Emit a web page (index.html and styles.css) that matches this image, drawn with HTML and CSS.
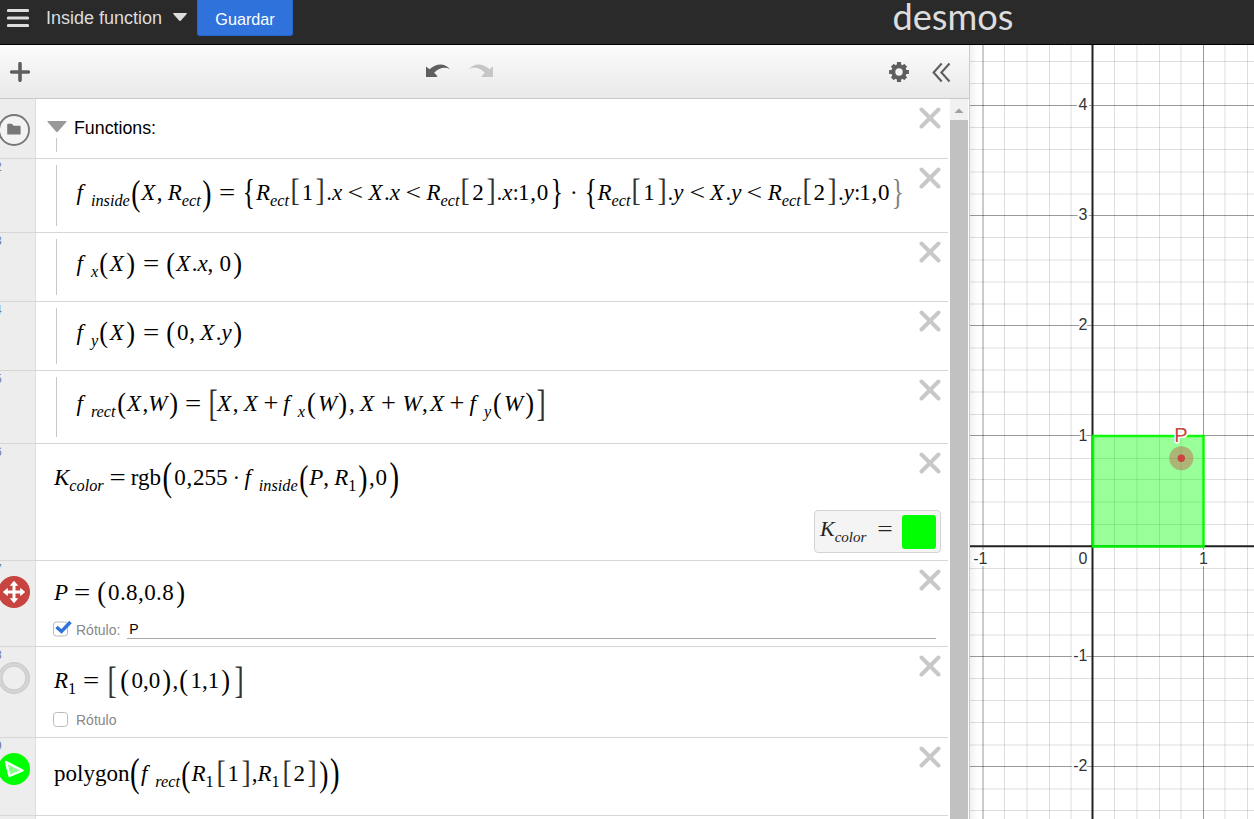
FILE: index.html
```html
<!DOCTYPE html>
<html lang="pt">
<head>
  <meta charset="UTF-8">
  <title>Inside function</title>
  <link rel="stylesheet" href="styles.css">
</head>
<body>

<header class="topbar">
  <svg class="menu-icon" width="22" height="20" viewBox="0 0 22 20">
    <path d="M1.5 2.5h19M1.5 10h19M1.5 17.5h19" stroke="#ddd" stroke-width="3.2" stroke-linecap="round"/>
  </svg>
  <span class="title">Inside function</span>
  <svg class="caret" width="14" height="9" viewBox="0 0 14 9"><path d="M.7 0h12.600q1 .2.4 1l-6 6.800q-.7.6-1.400 0l-6-6.800q-.6-.8.4-1z" fill="#ddd"/></svg>
  <button class="save">Guardar</button>
  <svg class="logo" width="130" height="43" viewBox="0 0 130 43">
    <text x="2.500" y="30" textLength="121" lengthAdjust="spacingAndGlyphs">desmos</text>
  </svg>
</header>

<main class="main">
  <section class="panel">
    <div class="toolbar">
      <svg class="add" width="20" height="20" viewBox="0 0 20 20"><path d="M10 1.700v16.600M1.700 10h16.600" stroke="#5f5f5f" stroke-width="3.600" stroke-linecap="round"/></svg>
      <svg class="undo" width="24" height="15" viewBox="0 0 24 15"><path d="M0 2.500l3.500 2.800C10-1 19-1.500 24 5.300 19 2.500 13 3.800 8.200 8.800L11.500 12.300 10.500 13H0z" fill="#5f5f5f"/></svg>
      <svg class="redo" width="24" height="15" viewBox="0 0 24 15"><path d="M24 2.500l-3.500 2.800C14-1 5-1.500 0 5.300 5 2.500 11 3.800 15.800 8.800L12.500 12.300l1 .7H24z" fill="#c6c6c6"/></svg>
      <svg class="gear" width="20" height="20" viewBox="-10 -10 20 20">
        <circle r="5.700" fill="none" stroke="#5f5f5f" stroke-width="4"/>
        <path d="M0-9.900V-6M0 9.900V6M-9.900 0H-6M9.900 0H6M-6.700-6.700l2 2M6.700-6.700l-2 2M-6.700 6.700l2-2M6.700 6.700l-2-2" stroke="#5f5f5f" stroke-width="4.200"/>
      </svg>
      <svg class="collapse" width="19" height="21" viewBox="0 0 19 21"><path d="M9.700 1.500L1.600 10.500l8.100 9M17.500 1.500l-8.100 9 8.100 9" fill="none" stroke="#5f5f5f" stroke-width="2.100"/></svg>
    </div>

    <div class="content">
      <div class="list">

        <div class="row row-folder">
          <div class="gutter">
            <span class="num"></span>
            <svg class="badge" width="32" height="32" viewBox="0 0 32 32">
              <circle cx="16" cy="16" r="15" fill="#f3f3f3" stroke="#777" stroke-width="1.800"/>
              <path d="M9.200 10.700q0-.9.900-.9h3.700l1.800 1.900h6q1 0 1 1v7q0 .9-1 .9H10.100q-.9 0-.9-.9z" fill="#777"/>
            </svg>
          </div>
          <div class="body folder">
            <svg class="fold" width="20" height="12" viewBox="0 0 20 12"><path d="M1 0h18q1 .1.400 1l-8.600 9.800q-.8.700-1.600 0L.6 1Q0 .1 1 0z" fill="#999"/></svg>
            <span class="folder-name">Functions:</span>
            <div class="folder-line"></div>
          </div>
          <svg class="close" viewBox="0 0 22 22"><path d="M2.500 2.500l17 17M19.500 2.500l-17 17"/></svg>
        </div>

        <div class="row row-inside">
          <div class="gutter"><span class="num">2</span></div>
          <div class="body nested">
            <div class="math">
              <var class="f">f</var><sub>inside</sub><b class="d2">(</b><var class="v">X</var><i class="comma">,</i><var>R</var><sub>ect</sub><b class="d2">)</b>
              <span class="eq">=</span>
              <b class="brace">{</b><var>R</var><sub>ect</sub><b class="br">[</b><span class="n">1</span><b class="br">]</b><span>.</span><var>x</var><span class="lt">&lt;</span><var class="v">X</var><span>.</span><var>x</var><span class="lt">&lt;</span><var>R</var><sub>ect</sub><b class="br">[</b><span class="n">2</span><b class="br">]</b><span>.</span><var>x</var><span>:</span><span class="tail">1,0</span><b class="brace">}</b>
              <span class="dot">·</span>
              <b class="brace">{</b><var>R</var><sub>ect</sub><b class="br">[</b><span class="n">1</span><b class="br">]</b><span>.</span><var>y</var><span class="lt">&lt;</span><var class="v">X</var><span>.</span><var>y</var><span class="lt">&lt;</span><var>R</var><sub>ect</sub><b class="br">[</b><span class="n">2</span><b class="br">]</b><span>.</span><var>y</var><span>:</span><span class="tail">1,0</span><b class="brace ghost">}</b>
            </div>
          </div>
          <svg class="close" viewBox="0 0 22 22"><path d="M2.500 2.500l17 17M19.500 2.500l-17 17"/></svg>
        </div>

        <div class="row row-fx">
          <div class="gutter"><span class="num">3</span></div>
          <div class="body nested">
            <div class="math">
              <var class="f">f</var><sub>x</sub><b class="d1">(</b><var class="v">X</var><b class="d1">)</b>
              <span class="eq">=</span>
              <b class="d1">(</b><var class="v">X</var><span>.</span><var>x</var><i class="comma">,</i><span class="n">0</span><b class="d1">)</b>
            </div>
          </div>
          <svg class="close" viewBox="0 0 22 22"><path d="M2.500 2.500l17 17M19.500 2.500l-17 17"/></svg>
        </div>

        <div class="row row-fy">
          <div class="gutter"><span class="num">4</span></div>
          <div class="body nested">
            <div class="math">
              <var class="f">f</var><sub>y</sub><b class="d1">(</b><var class="v">X</var><b class="d1">)</b>
              <span class="eq">=</span>
              <b class="d1">(</b><span class="n">0</span><i class="comma">,</i><var class="v">X</var><span>.</span><var>y</var><b class="d1">)</b>
            </div>
          </div>
          <svg class="close" viewBox="0 0 22 22"><path d="M2.500 2.500l17 17M19.500 2.500l-17 17"/></svg>
        </div>

        <div class="row row-rect">
          <div class="gutter"><span class="num">5</span></div>
          <div class="body nested">
            <div class="math">
              <var class="f">f</var><sub>rect</sub><b class="d1">(</b><var class="v">X</var><span>,</span><var class="w">W</var><b class="d1">)</b>
              <span class="eq">=</span>
              <b class="br big open">[</b><var class="v">X</var><i class="comma">,</i><var class="v">X</var><span class="plus">+</span><var class="f">f</var><sub>x</sub><b class="d1 wide">(</b><var class="w">W</var><b class="d1">)</b><i class="comma">,</i><var class="v">X</var><span class="plus wide">+</span><var class="w">W</var><i class="comma tight">,</i><var class="v">X</var><span class="plus">+</span><var class="f">f</var><sub>y</sub><b class="d1 wide">(</b><var class="w">W</var><b class="d1">)</b><b class="br big">]</b>
            </div>
          </div>
          <svg class="close" viewBox="0 0 22 22"><path d="M2.500 2.500l17 17M19.500 2.500l-17 17"/></svg>
        </div>

        <div class="row row-color">
          <div class="gutter"><span class="num">6</span></div>
          <div class="body">
            <div class="math">
              <var>K</var><sub>color</sub><span class="eq tight">=</span><span>rgb</span><b class="d3">(</b><span class="n">0</span><span>,</span><span class="n">255</span><span class="dot">·</span><var class="f">f</var><sub>inside</sub><b class="d2">(</b><var>P</var><i class="comma">,</i><var>R</var><sub class="up">1</sub><b class="d2">)</b><span>,</span><span class="n">0</span><b class="d3">)</b>
            </div>
            <div class="result">
              <div class="math small"><var>K</var><sub>color</sub><span class="eq">=</span></div>
              <div class="swatch"></div>
            </div>
          </div>
          <svg class="close" viewBox="0 0 22 22"><path d="M2.500 2.500l17 17M19.500 2.500l-17 17"/></svg>
        </div>

        <div class="row row-point">
          <div class="gutter">
            <span class="num">7</span>
            <svg class="badge" width="32" height="32" viewBox="0 0 32 32">
              <circle cx="16" cy="16" r="16" fill="#c74440"/>
              <path d="M16 8v16M8 16h16" stroke="#fff" stroke-width="3"/>
              <path d="M16 4.800l4.300 5h-8.600zM16 27.200l4.300-5h-8.600zM4.800 16l5-4.300v8.600zM27.200 16l-5-4.300v8.600z" fill="#fff"/>
            </svg>
          </div>
          <div class="body">
            <div class="math">
              <var>P</var><span class="eq tight">=</span><b class="d1">(</b><span class="pair">0.8,0.8</span><b class="d1">)</b>
            </div>
            <div class="label-line">
              <svg class="check" width="20" height="17" viewBox="0 0 20 17">
                <rect x=".5" y="2" width="14" height="14" rx="3" fill="#fff" stroke="#bbb"/>
                <path d="M3.500 7l5 4.500L17.500 2" fill="none" stroke="#2f72dc" stroke-width="3.400"/>
              </svg>
              <span class="label">Rótulo:</span>
              <span class="input">P</span>
            </div>
          </div>
          <svg class="close" viewBox="0 0 22 22"><path d="M2.500 2.500l17 17M19.500 2.500l-17 17"/></svg>
        </div>

        <div class="row row-list">
          <div class="gutter">
            <span class="num">8</span>
            <svg class="badge" width="32" height="32" viewBox="0 0 32 32">
              <circle cx="16" cy="16" r="13.600" fill="#eee" stroke="#ccc" stroke-width="4.800"/>
              <circle cx="16" cy="16" r="13.600" fill="none" stroke="#d6d6d6" stroke-width="2"/>
            </svg>
          </div>
          <div class="body">
            <div class="math">
              <var>R</var><sub class="up">1</sub><span class="eq tight">=</span><b class="br big">[</b><b class="d1">(</b><span class="n">0,0</span><b class="d1">)</b><span>,</span><b class="d1">(</b><span class="n">1,1</span><b class="d1">)</b><b class="br big">]</b>
            </div>
            <div class="label-line">
              <svg class="check" width="20" height="17" viewBox="0 0 20 17"><rect x=".5" y="2.500" width="14" height="14" rx="3" fill="#fff" stroke="#bbb"/></svg>
              <span class="label">Rótulo</span>
            </div>
          </div>
          <svg class="close" viewBox="0 0 22 22"><path d="M2.500 2.500l17 17M19.500 2.500l-17 17"/></svg>
        </div>

        <div class="row row-polygon">
          <div class="gutter">
            <span class="num">9</span>
            <svg class="badge" width="32" height="32" viewBox="0 0 32 32">
              <circle cx="16" cy="16" r="16" fill="#0f0"/>
              <path d="M8 9l16.500 8.500L11.500 23z" fill="#8f8" stroke="#fff" stroke-width="2.400" stroke-linejoin="round"/>
            </svg>
          </div>
          <div class="body">
            <div class="math">
              <span>polygon</span><b class="d3">(</b><var class="f">f</var><sub>rect</sub><b class="d2">(</b><var>R</var><sub class="up">1</sub><b class="br">[</b><span class="n">1</span><b class="br">]</b><span>,</span><var>R</var><sub class="up">1</sub><b class="br">[</b><span class="n">2</span><b class="br">]</b><b class="d2">)</b><b class="d3">)</b>
            </div>
          </div>
          <svg class="close" viewBox="0 0 22 22"><path d="M2.500 2.500l17 17M19.500 2.500l-17 17"/></svg>
        </div>

        <div class="row row-last">
          <div class="gutter"></div>
          <div class="body"></div>
        </div>
      </div>

      <div class="scrollbar">
        <svg width="18" height="21" viewBox="0 0 18 21"><path d="M4.500 14L9 9.500l4.500 4.500z" fill="#a0a0a0"/></svg>
        <div class="thumb"></div>
      </div>
    </div>
  </section>

  <section class="graph">
    <!-- origin at (1092.5, 546), one unit is about 110px -->
    <svg width="284" height="774" viewBox="970 45 284 774">
      <path class="minor" d="M1004.500 45v774M1027 45v774M1049.500 45v774M1071 45v774M1114.500 45v774M1137 45v774M1159.500 45v774M1181 45v774M1225 45v774M1247.500 45v774"/>
      <path class="minor" d="M970 61.500h284M970 83.500h284M970 127.500h284M970 149.500h284M970 172h284M970 194h284M970 237.500h284M970 260h284M970 282h284M970 304h284M970 348h284M970 370h284M970 392h284M970 414.500h284M970 458.500h284M970 479.500h284M970 502h284M970 524.500h284M970 568.500h284M970 590h284M970 612.500h284M970 635h284M970 678.500h284M970 700.500h284M970 722.500h284M970 745h284M970 789h284M970 810.500h284"/>
      <path class="major" d="M983 45v774M1203.500 45v774M970 105.500h284M970 215.500h284M970 325.500h284M970 435.500h284M970 656.500h284M970 766.500h284"/>
      <path class="axis" d="M1092.500 45v774M970 546.300h284"/>
      <g class="tick">
        <text x="1087.500" y="110">4</text>
        <text x="1087.500" y="220">3</text>
        <text x="1087.500" y="330">2</text>
        <text x="1087.500" y="441">1</text>
        <text x="1087.500" y="661">-1</text>
        <text x="1087.500" y="771">-2</text>
        <text x="1087.500" y="564">0</text>
        <text x="987.500" y="564">-1</text>
        <text x="1208" y="564">1</text>
      </g>
      <path d="M1093 436h110.500v110.500H1093z" fill="#0f0" fill-opacity=".4" stroke="#0f0" stroke-opacity=".9" stroke-width="2.600"/>
      <circle cx="1181.300" cy="458.300" r="12" fill="#c74440" fill-opacity=".4"/>
      <circle cx="1181.300" cy="458.300" r="3.700" fill="#c74440"/>
      <text class="point-name" x="1181" y="441.500">P</text>
    </svg>
  </section>
</main>

</body>
</html>
```
FILE: styles.css
```css
body {
  margin: 0;
  width: 1254px;
  height: 819px;
  overflow: hidden;
  font-family: Arial, "Liberation Sans", sans-serif;
  background: #fff;
}
svg {
  display: block;
  flex: none;
}

/* top bar */
.topbar {
  display: flex;
  height: 44px;
  background: #2a2a2a;
  border-bottom: 1px solid #000;
}
.menu-icon {
  margin: 8px 0 0 7px;
}
.title {
  margin: 7px 0 0 17px;
  width: 127px;
  font-size: 18px;
  line-height: 22px;
  color: #ddd;
}
.caret {
  margin-top: 13px;
}
.save {
  width: 96px;
  height: 36px;
  margin-left: 10px;
  padding: 3px 0 0;
  border: 1px solid #2566cf;
  border-top: 0;
  border-radius: 0 0 3px 3px;
  background: #2f72dc;
  color: #fff;
  font-family: inherit;
  font-size: 16.200px;
}
.logo {
  margin-left: 597px;
  overflow: visible;
}
.logo text {
  font-family: Lato, sans-serif;
  font-size: 36px;
  fill: #ddd;
}

/* panel */
.main {
  display: flex;
  height: 774px;
}
.panel {
  width: 969px;
  border-right: 1px solid #ccc;
  display: flex;
  flex-direction: column;
}
.toolbar {
  display: flex;
  height: 53px;
  background: linear-gradient(#fcfcfc, #e9e9e9);
  border-bottom: 1px solid #c8c8c8;
}
.add { margin: 17px 0 0 10px; }
.undo { margin: 19px 0 0 396px; }
.redo { margin: 19px 0 0 19px; }
.gear { margin: 17px 0 0 396px; }
.collapse { margin: 17px 0 0 23px; }
.content {
  display: flex;
  flex: 1;
  min-height: 0;
}
.list {
  width: 948px;
  overflow: hidden;
}
.row {
  position: relative;
  display: flex;
  box-sizing: border-box;
  border-bottom: 1px solid #d6d6d6;
}
.gutter {
  box-sizing: border-box;
  width: 36px;
  background: #ededed;
  border-right: 1px solid #ddd;
  overflow: hidden;
}
.num {
  display: block;
  height: 15px;
  margin-left: -5px;
  font-size: 12px;
  line-height: 16px;
  color: #7078a0;
}
.badge {
  margin-left: -2px;
}
.body {
  flex: 1;
  padding-left: 18px;
}
.close {
  position: absolute;
  top: 8px;
  right: 7.500px;
  width: 22px;
  height: 22px;
  stroke: #c8c8c8;
  stroke-width: 4;
  stroke-linecap: round;
}
.nested {
  display: flex;
}
.nested::before {
  content: "";
  width: 1px;
  margin: 6px 20px 6px 2px;
  background: #c8c8c8;
}

.row-folder { height: 60px; }
.row-inside { height: 74px; }
.row-fx { height: 69px; }
.row-fy { height: 69px; }
.row-rect { height: 73px; }
.row-color { height: 117px; }
.row-point { height: 86px; }
.row-list { height: 91px; }
.row-polygon { height: 78px; }
.row-last { height: 40px; }

.folder {
  display: grid;
  grid-template-columns: 27px 1fr;
  grid-template-rows: 39px 14px;
  padding-left: 11px;
}
.fold {
  margin-top: 22px;
}
.folder-name {
  margin-top: 18px;
  font-size: 17.800px;
  line-height: 22px;
}
.folder-line {
  width: 1px;
  margin-left: 9px;
  background: #c8c8c8;
}

/* formulas */
.math {
  display: flex;
  align-items: baseline;
  padding-top: 20px;
  font-family: "Liberation Serif", "Times New Roman", serif;
  font-size: 23px;
  line-height: 1;
  white-space: nowrap;
}
.row-inside .math { padding-top: 22px; }
.row-fx .math,
.row-fy .math { padding-top: 19px; }
.row-rect .math { padding-top: 21px; }
.row-color .math { padding-top: 22px; }
.row-list .math { padding-top: 22px; }
.row-polygon .math { padding-top: 24px; }
.math b,
.math i {
  font-weight: normal;
  font-style: normal;
}
.math .f {
  margin: 0 8px 0 0;
}
.nested .math > .f:first-child {
  margin-left: -.5px;
}
.math .v { width: 15.500px; }
.math .w { width: 19.500px; }
.math .n { margin: 0 .8px; }
.math .pair {
  margin: 0 .5px;
  letter-spacing: .4px;
}
.math .tail {
  margin: 0 1px 0 -1px;
  letter-spacing: .8px;
}
.math sub {
  font-size: 16.300px;
  line-height: 1;
  font-style: italic;
  vertical-align: baseline;
  transform: translateY(6px);
}
.math .up {
  font-style: normal;
  margin-right: 1px;
}
.math .comma { width: 11px; }
.math .comma.tight { width: 8px; }
.math .eq,
.math .lt,
.math .plus,
.math .dot,
.math b {
  text-align: center;
  transform-origin: 50% .5875em;
}
.math .eq {
  width: 30px;
  transform: scaleX(1.25);
}
.math .eq.tight { width: 28px; }
.row-fx .eq,
.row-fy .eq,
.row-rect .eq { width: 28px; }
.row-color .math .eq.tight { width: 27px; }
.math .lt {
  width: 26.400px;
  transform: scaleX(1.2);
}
.math .plus {
  width: 24px;
  transform: scale(1.15);
}
.math .plus.wide { width: 27px; }
.math .dot { width: 20px; }
.row-color .dot { width: 16px; }
.math .d1 {
  width: 11.500px;
  transform: scale(1.15, 1.28);
}
.math .d1.wide { width: 13px; }
.math .d2 {
  width: 11.500px;
  transform: translateY(2px) scale(1.2, 1.53);
}
.math .d3 {
  width: 12.500px;
  transform: translateY(1px) scale(1.25, 1.78);
}
.row-polygon .d3 { width: 11.500px; }
.math .br {
  width: 12px;
  color: #333;
  transform: scale(1.2, 1.33);
}
.row-inside .br { transform: translateY(-1px) scale(1.2, 1.33); }
.math .br.big {
  transform: translateY(1px) scale(1.2, 1.65);
}
.math .br.open { margin-right: -2px; }
.row-list .br { width: 14px; }
.math .brace {
  width: 13.700px;
  transform: translateY(1px) scale(1.1, 1.55);
}
.math .ghost { opacity: .5; }

.row-color .body {
  display: flex;
  flex-direction: column;
}
.result {
  display: flex;
  align-self: flex-end;
  box-sizing: border-box;
  width: 127px;
  height: 43px;
  margin: 21px 7px 0 0;
  padding: 4px 4px 4px 5px;
  background: #f4f4f4;
  border: 1px solid #d3d3d3;
  border-radius: 4px;
}
.result .math.small {
  flex: 1;
  padding-top: 3px;
  font-size: 22px;
  color: #222;
}
.result .math sub {
  font-size: 15px;
}
.result .math .eq {
  width: 14px;
  margin-left: 12px;
}
.swatch {
  width: 34px;
  height: 34px;
  border-radius: 3px;
  background: #0f0;
}

.label-line {
  display: flex;
  margin: 16px 12px 0 -1px;
  font-size: 14px;
  line-height: 18px;
  color: #888;
}
.row-list .label-line {
  margin-top: 18px;
}
.label {
  margin: 1px 7px 0 3px;
}
.input {
  flex: 1;
  height: 18px;
  padding-left: 2px;
  border-bottom: 1px solid #aaa;
  color: #000;
}

.scrollbar {
  width: 18px;
  margin-left: 2px;
  background: #f1f1f1;
}
.thumb {
  height: 700px;
  background: #c1c1c1;
}

/* graph */
.graph {
  width: 284px;
}
.graph svg {
  background: linear-gradient(90deg, #f1f1f1, #fff 8px);
}
.minor,
.major {
  stroke: #000;
  stroke-opacity: .13;
}
.major {
  stroke-opacity: .4;
}
.axis {
  stroke: #222;
  stroke-width: 2;
}
.tick text,
.point-name {
  font-size: 16px;
  fill: #333;
  stroke: #fff;
  stroke-width: 4px;
  stroke-linejoin: round;
  paint-order: stroke;
  text-anchor: end;
}
.point-name {
  font-size: 20px;
  fill: #c74440;
  stroke-width: 3px;
  text-anchor: middle;
}
```
